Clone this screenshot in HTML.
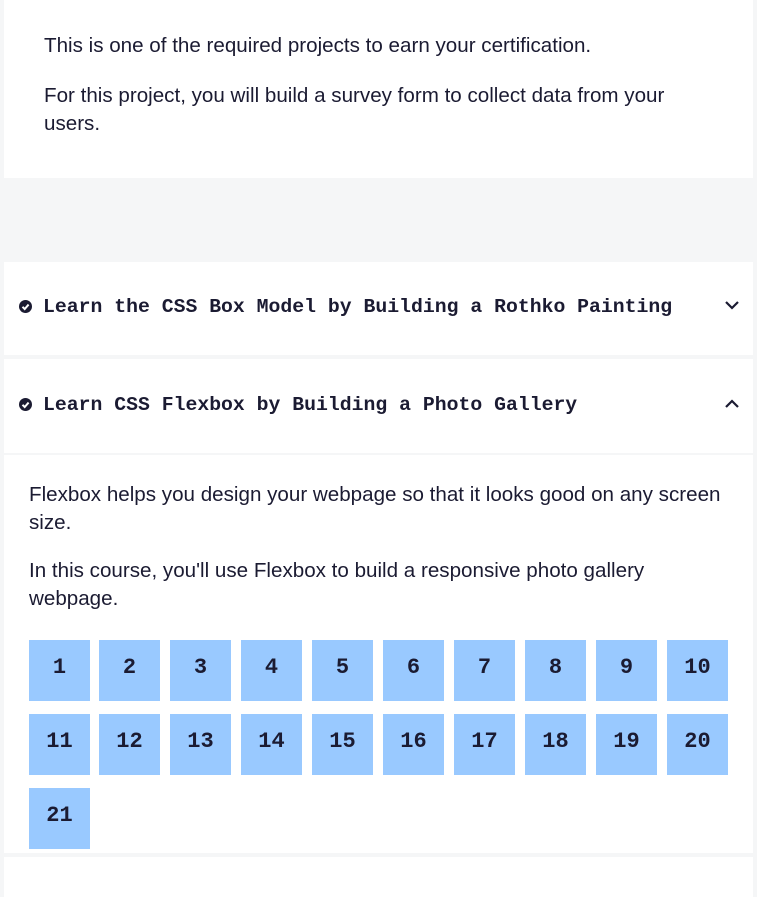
<!DOCTYPE html>
<html><head><style>
body{margin:0;background:#f5f6f7;width:757px;height:890px;overflow:hidden;font-family:"Liberation Sans",sans-serif;color:#1b1b32}
.panel{position:absolute;left:4px;width:749px;background:#fff}
p{margin:0;position:absolute;font-size:20.6px;line-height:28px}
.h{position:absolute;left:43px;font-family:"Liberation Mono",monospace;font-weight:bold;font-size:19.8px;line-height:24px}
.ic{position:absolute;left:19px;width:13px;height:13px;border-radius:50%;background:#1b1b32}
.ic svg{position:absolute;left:0;top:0}
.chev{position:absolute;left:724px}
.sq{position:absolute;width:61px;height:61px;background:#99c9ff;font-family:"Liberation Mono",monospace;font-weight:bold;font-size:22px;line-height:56px;text-align:center;color:#1b1b32}
</style></head><body>
<div class="panel" style="top:0;height:178px"></div>
<p style="left:44px;top:32px">This is one of the required projects to earn your certification.</p>
<p style="left:44px;top:82px;width:640px">For this project, you will build a survey form to collect data from your users.</p>
<div class="panel" style="top:262px;height:93px"></div>
<div class="ic" style="top:300px"><svg width="13" height="13"><path d="M3.5 6.8L5.7 9L9.6 4.6" stroke="#fff" stroke-width="2" fill="none"/></svg></div>
<div class="h" style="top:295px">Learn the CSS Box Model by Building a Rothko Painting</div>
<svg class="chev" style="top:299px" width="16" height="12"><path d="M2 3L8 9L14 3" stroke="#1b1b32" stroke-width="2.2" fill="none"/></svg>
<div class="panel" style="top:359px;height:94px"></div>
<div class="ic" style="top:398px"><svg width="13" height="13"><path d="M3.5 6.8L5.7 9L9.6 4.6" stroke="#fff" stroke-width="2" fill="none"/></svg></div>
<div class="h" style="top:393px">Learn CSS Flexbox by Building a Photo Gallery</div>
<svg class="chev" style="top:398px" width="16" height="12"><path d="M2 9L8 3L14 9" stroke="#1b1b32" stroke-width="2.2" fill="none"/></svg>
<div class="panel" style="top:455px;height:398px"></div>
<p style="left:29px;top:481px;width:700px">Flexbox helps you design your webpage so that it looks good on any screen size.</p>
<p style="left:29px;top:557px;width:650px">In this course, you'll use Flexbox to build a responsive photo gallery webpage.</p>
<div class="sq" style="left:29px;top:640px">1</div>
<div class="sq" style="left:99px;top:640px">2</div>
<div class="sq" style="left:170px;top:640px">3</div>
<div class="sq" style="left:241px;top:640px">4</div>
<div class="sq" style="left:312px;top:640px">5</div>
<div class="sq" style="left:383px;top:640px">6</div>
<div class="sq" style="left:454px;top:640px">7</div>
<div class="sq" style="left:525px;top:640px">8</div>
<div class="sq" style="left:596px;top:640px">9</div>
<div class="sq" style="left:667px;top:640px">10</div>
<div class="sq" style="left:29px;top:714px">11</div>
<div class="sq" style="left:99px;top:714px">12</div>
<div class="sq" style="left:170px;top:714px">13</div>
<div class="sq" style="left:241px;top:714px">14</div>
<div class="sq" style="left:312px;top:714px">15</div>
<div class="sq" style="left:383px;top:714px">16</div>
<div class="sq" style="left:454px;top:714px">17</div>
<div class="sq" style="left:525px;top:714px">18</div>
<div class="sq" style="left:596px;top:714px">19</div>
<div class="sq" style="left:667px;top:714px">20</div>
<div class="sq" style="left:29px;top:788px">21</div>
<div class="panel" style="top:857px;height:40px"></div>
</body></html>
